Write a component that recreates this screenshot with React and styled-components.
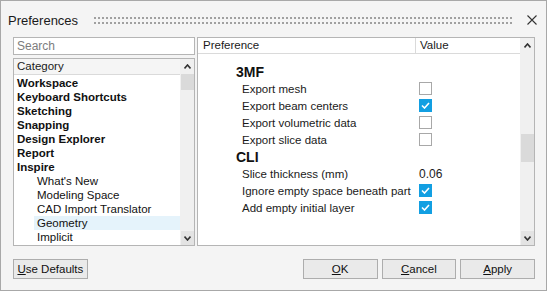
import React from "react";
import styled, { createGlobalStyle } from "styled-components";

const Global = createGlobalStyle`
  html, body { margin: 0; padding: 0; background: #f4f4f4; }
  body { font-family: "Liberation Sans", Arial, sans-serif; font-size: 11.5px; color: #000; }
`;

const Dialog = styled.div`
  width: 547px;
  height: 291px;
  box-sizing: border-box;
  border: 1px solid #a8a8a8;
  background: #f4f4f4;
  display: flex;
  flex-direction: column;
`;

const TitleBar = styled.div`
  height: 36px;
  display: flex;
  align-items: center;
  padding: 0 9px 0 7px;
`;

const Title = styled.div`
  font-size: 13px;
  color: #1a1a1a;
  margin-top: 2px;
`;

const Grip = styled.div`
  flex: 1;
  height: 7px;
  margin: 2px 14px 0 16px;
  background-image: radial-gradient(circle at 1px 1px, #a0a0a0 0.9px, transparent 1.1px);
  background-size: 4px 5px;
`;

const Close = styled.div`
  width: 10px;
  height: 10px;
  display: flex;
  margin-top: 2px;
`;

const Body = styled.div`
  display: flex;
  gap: 2px;
  padding: 0 11px 0 12px;
`;

const LeftCol = styled.div`
  width: 182px;
  display: flex;
  flex-direction: column;
  gap: 3px;
`;

const Search = styled.div`
  height: 16px;
  border: 1px solid #b5b5b5;
  background: #fff;
  color: #7d7d7d;
  padding-left: 3px;
  line-height: 16px;
  font-size: 12px;
`;

const ListBox = styled.div`
  height: 186px;
  border: 1px solid #b5b5b5;
  background: #fff;
  display: flex;
`;

const ListMain = styled.div`
  flex: 1;
  display: flex;
  flex-direction: column;
`;

const ListHeader = styled.div`
  height: 15px;
  line-height: 15px;
  padding-left: 3px;
  background: #f5f5f5;
  border-bottom: 1px solid #dadada;
  color: #1a1a1a;
`;

const ListItems = styled.div`
  padding-top: 1px;
`;

const Item = styled.div`
  height: 14px;
  line-height: 14px;
  padding-left: 3px;
  margin-left: ${(p) => (p.$sub ? "20px" : "0")};
  font-weight: ${(p) => (p.$sub ? "normal" : "bold")};
  background: ${(p) => (p.$selected ? "#e5f3fb" : "transparent")};
  color: #111;
  white-space: nowrap;
`;

const ScrollBar = styled.div`
  width: 13px;
  background: #f0f0f0;
  display: flex;
  flex-direction: column;
  border-left: 1px solid #f0f0f0;
`;

const Arrow = styled.div`
  height: 14px;
  display: flex;
  align-items: center;
  justify-content: center;
  background: ${(p) => (p.$shade ? "#e3e3e3" : "transparent")};
`;

const Track = styled.div`
  flex: 1;
  display: flex;
  flex-direction: column;
  padding-top: ${(p) => p.$offset}px;
`;

const Thumb = styled.div`
  height: ${(p) => p.$size}px;
  background: #dadada;
`;

const Pane = styled.div`
  flex: 1;
  height: 207px;
  border: 1px solid #b5b5b5;
  background: #fff;
  display: flex;
`;

const PaneMain = styled.div`
  flex: 1;
  display: flex;
  flex-direction: column;
`;

const PaneHeader = styled.div`
  height: 15px;
  display: grid;
  grid-template-columns: 218px 1fr;
  border-bottom: 1px solid #dadada;
`;

const HeadCell = styled.div`
  line-height: 15px;
  padding-left: ${(p) => p.$pad}px;
  border-right: ${(p) => (p.$divider ? "1px solid #dadada" : "none")};
  color: #1a1a1a;
`;

const Rows = styled.div`
  padding-top: 9px;
  display: flex;
  flex-direction: column;
`;

const Row = styled.div`
  height: 17px;
  display: grid;
  grid-template-columns: 221px 1fr;
  align-items: center;
`;

const Heading = styled.div`
  padding-left: 38px;
  font-weight: bold;
  font-size: 14px;
  color: #111;
`;

const Label = styled.div`
  padding-left: 44px;
  color: #1a1a1a;
  white-space: nowrap;
`;

const Box = styled.div`
  width: 13px;
  height: 13px;
  box-sizing: border-box;
  border: 1px solid ${(p) => (p.$on ? "#129fe2" : "#a8a8a8")};
  background: ${(p) => (p.$on ? "#129fe2" : "#fff")};
  display: flex;
  align-items: center;
  justify-content: center;
`;

const Value = styled.div`
  color: #1a1a1a;
  font-size: 12px;
`;

const Footer = styled.div`
  display: flex;
  align-items: center;
  padding: 13px 11px 0 12px;
  gap: 4px;
`;

const Button = styled.button`
  width: ${(p) => p.$w}px;
  height: 20px;
  box-sizing: border-box;
  border: 1px solid #adadad;
  background: #eaeaea;
  font-family: "Liberation Sans", Arial, sans-serif;
  font-size: 11.5px;
  color: #111;
  padding: 0;
  margin-left: ${(p) => p.$ml || 0}px;
  u { text-decoration: underline; }
`;

const Up = () => (
  <svg width="7" height="5" viewBox="0 0 7 5"><path d="M0.5 4.5 L3.5 1 L6.5 4.5" stroke="#333" strokeWidth="1.6" fill="none" /></svg>
);
const Down = () => (
  <svg width="7" height="5" viewBox="0 0 7 5"><path d="M0.5 0.5 L3.5 4 L6.5 0.5" stroke="#333" strokeWidth="1.6" fill="none" /></svg>
);

const Check = () => (
  <svg width="9" height="7" viewBox="0 0 9 7">
    <path d="M1 3.5 L3.5 6 L8 1" stroke="#fff" strokeWidth="1.6" fill="none" />
  </svg>
);

const categories = [
  ["Workspace"],
  ["Keyboard Shortcuts"],
  ["Sketching"],
  ["Snapping"],
  ["Design Explorer"],
  ["Report"],
  ["Inspire"],
  ["What's New", true],
  ["Modeling Space", true],
  ["CAD Import Translator", true],
  ["Geometry", true, true],
  ["Implicit", true],
];

const prefs = [
  { type: "h", text: "3MF" },
  { text: "Export mesh", box: false },
  { text: "Export beam centers", box: true },
  { text: "Export volumetric data", box: false },
  { text: "Export slice data", box: false },
  { type: "h", text: "CLI" },
  { text: "Slice thickness (mm)", value: "0.06" },
  { text: "Ignore empty space beneath part", box: true },
  { text: "Add empty initial layer", box: true },
];

export default function App() {
  return (
    <>
      <Global />
      <Dialog>
        <TitleBar>
          <Title>Preferences</Title>
          <Grip />
          <Close>
            <svg width="10" height="10" viewBox="0 0 10 10">
              <path d="M0.5 0.5 L9.5 9.5 M9.5 0.5 L0.5 9.5" stroke="#333" strokeWidth="1.1" />
            </svg>
          </Close>
        </TitleBar>
        <Body>
          <LeftCol>
            <Search>Search</Search>
            <ListBox>
              <ListMain>
                <ListHeader>Category</ListHeader>
                <ListItems>
                  {categories.map(([t, sub, sel]) => (
                    <Item key={t} $sub={sub} $selected={sel}>{t}</Item>
                  ))}
                </ListItems>
              </ListMain>
              <ScrollBar>
                <Arrow><Up /></Arrow>
                <Track $offset={1}><Thumb $size={16} /></Track>
                <Arrow $shade><Down /></Arrow>
              </ScrollBar>
            </ListBox>
          </LeftCol>
          <Pane>
            <PaneMain>
              <PaneHeader>
                <HeadCell $pad={5} $divider>Preference</HeadCell>
                <HeadCell $pad={4}>Value</HeadCell>
              </PaneHeader>
              <Rows>
                {prefs.map((p) =>
                  p.type === "h" ? (
                    <Row key={p.text}><Heading>{p.text}</Heading></Row>
                  ) : (
                    <Row key={p.text}>
                      <Label>{p.text}</Label>
                      {p.value ? (
                        <Value>{p.value}</Value>
                      ) : (
                        <Box $on={p.box}>{p.box && <Check />}</Box>
                      )}
                    </Row>
                  )
                )}
              </Rows>
            </PaneMain>
            <ScrollBar>
              <Arrow><Up /></Arrow>
              <Track $offset={82}><Thumb $size={28} /></Track>
              <Arrow $shade><Down /></Arrow>
            </ScrollBar>
          </Pane>
        </Body>
        <Footer>
          <Button $w={75}><u>U</u>se Defaults</Button>
          <Button $w={75} $ml={211}><u>O</u>K</Button>
          <Button $w={75}><u>C</u>ancel</Button>
          <Button $w={75}><u>A</u>pply</Button>
        </Footer>
      </Dialog>
    </>
  );
}
